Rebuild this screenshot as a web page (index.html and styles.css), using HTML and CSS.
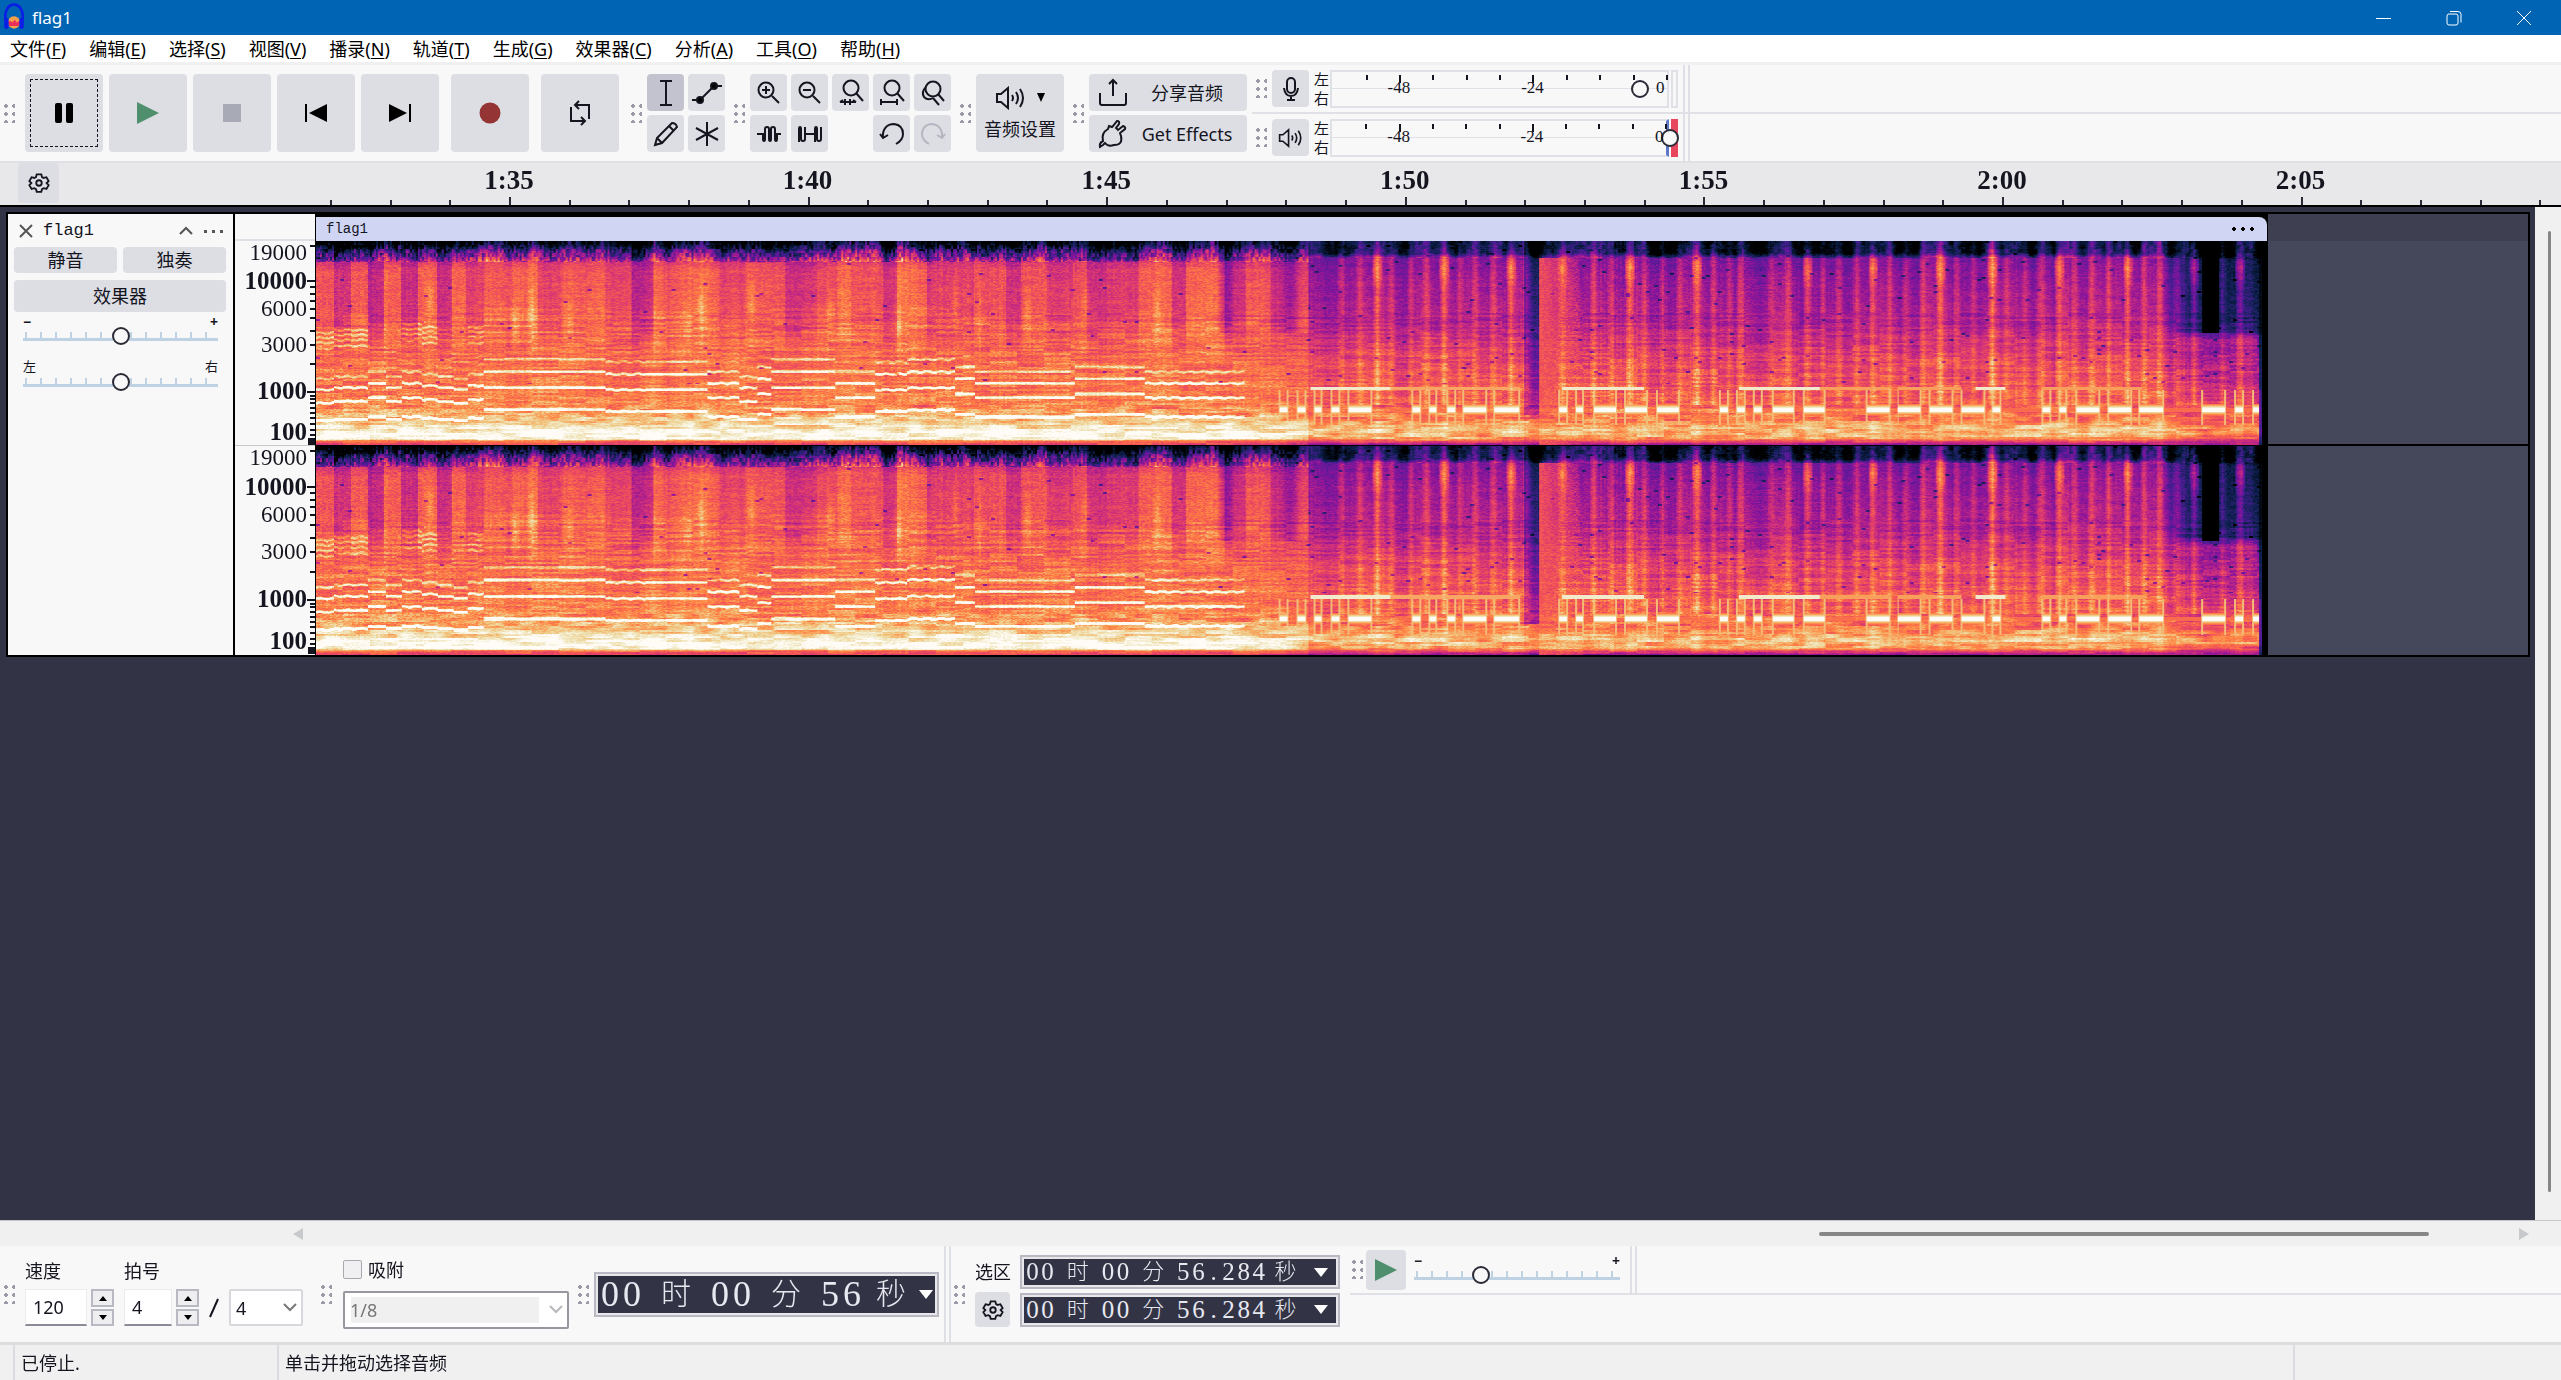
FILE: index.html
```html
<!DOCTYPE html>
<html lang="zh-CN">
<head>
<meta charset="utf-8">
<title>flag1</title>
<link rel="stylesheet" href="styles.css">
</head>
<body>
<svg class="defs" aria-hidden="true">
  <symbol id="gear" viewBox="0 0 24 24"><path d="M9.500 2.500h5l.8 3 1.800 1 3-.8 2.400 4.300-2.200 2.100 2.200 2.200-2.400 4.200-3-.8-1.800 1-.8 2.900h-5l-.8-2.900-1.800-1-3 .8L1.500 14.300l2.200-2.200L1.500 10l2.400-4.300 3 .8 1.800-1z"/><circle cx="12" cy="12" r="3"/></symbol>
  <symbol id="speaker" viewBox="0 0 32 24"><path d="M2 8h4l7-6v20l-7-6H2zM17 9q2 3 0 6M21 6q4 6 0 12M25 3q6 9 0 18"/></symbol>
</svg>

<header class="titlebar">
  <svg class="logo" viewBox="0 0 24 36"><path d="M3 22C0 10 6 3 12 3s12 7 9 19" fill="none" stroke="#0a1ee6" stroke-width="3"/><circle cx="12" cy="23" r="7" fill="#f5a04a"/><path d="M5 23l3-2 2 2 3-3 2 3 3-2 1 2-2 4H7z" fill="#e8305a"/><rect x="1" y="18" width="5" height="12" rx="2" fill="#0a1ee6"/><rect x="18" y="18" width="5" height="12" rx="2" fill="#0a1ee6"/></svg>
  <h1>flag1</h1>
  <div class="winbtns">
    <button aria-label="最小化"><svg width="16" height="16"><path d="M0 8.500h15"/></svg></button>
    <button aria-label="还原"><svg width="16" height="16"><rect x="1" y="4" width="11" height="11" rx="2"/><path d="M4 1.500h8q3 0 3 3v8"/></svg></button>
    <button aria-label="关闭"><svg width="16" height="16"><path d="M1 1l14 14M15 1L1 15"/></svg></button>
  </div>
</header>

<nav class="menubar">
  <a href="#">文件(<u>F</u>)</a><a href="#">编辑(<u>E</u>)</a><a href="#">选择(<u>S</u>)</a><a href="#">视图(<u>V</u>)</a><a href="#">播录(<u>N</u>)</a><a href="#">轨道(<u>T</u>)</a><a href="#">生成(<u>G</u>)</a><a href="#">效果器(<u>C</u>)</a><a href="#">分析(<u>A</u>)</a><a href="#">工具(<u>O</u>)</a><a href="#">帮助(<u>H</u>)</a>
</nav>

<section class="toolbar">
  <span class="grip"></span>
  <div class="transport">
    <button class="focused" aria-label="暂停"><svg width="20" height="20"><rect x="1" width="7" height="20" rx="2" fill="#000"/><rect x="12" width="7" height="20" rx="2" fill="#000"/></svg></button>
    <button aria-label="播放"><svg width="22" height="22"><path d="M0 0l22 11L0 22z" fill="#4f8f6d"/></svg></button>
    <button aria-label="停止"><svg width="18" height="18"><path d="M0 0h18v18H0z" fill="#a8abb5"/></svg></button>
    <button aria-label="跳到开头"><svg width="22" height="18"><path d="M22 0v18L4 9zM0 0h2v18H0z" fill="#000"/></svg></button>
    <button aria-label="跳到末尾"><svg width="22" height="18"><path d="M0 0v18l18-9zM20 0h2v18h-2z" fill="#000"/></svg></button>
    <button class="apart" aria-label="录制"><svg width="22" height="22"><circle cx="11" cy="11" r="10.500" fill="#943434"/></svg></button>
    <button class="apart" aria-label="循环"><svg class="line" width="24" height="26"><path d="M8 5h13v14M11 1L7 5l4 4M16 21H3V7M13 17l4 4-4 4"/></svg></button>
  </div>
  <span class="grip"></span>
  <div class="pad two">
    <button class="active" aria-label="选择工具"><svg class="line" width="26" height="26"><path d="M7 1h12M13 1v24M7 25h12"/></svg></button>
    <button aria-label="包络工具"><svg class="line" width="30" height="20"><path d="M0 17h8l14-14h8"/><circle cx="8" cy="17" r="3" fill="#000"/><circle cx="22" cy="3" r="3" fill="#000"/></svg></button>
    <button aria-label="绘制工具"><svg class="line" width="24" height="24"><path d="M1 23l2-7L18 1q4 0 5 4L8 21zM3 16l5 5M15 4l5 5"/></svg></button>
    <button aria-label="多功能工具"><svg class="line" width="24" height="24"><path d="M12 0v24M1 6l22 12M23 6L1 18"/></svg></button>
  </div>
  <span class="grip"></span>
  <div class="pad five">
    <button aria-label="放大"><svg class="line" width="22" height="22"><circle cx="8" cy="8" r="7.500"/><path d="M14 14l7 7M4 8h8M8 4v8"/></svg></button>
    <button aria-label="缩小"><svg class="line" width="22" height="22"><circle cx="8" cy="8" r="7.500"/><path d="M14 14l7 7M4 8h8"/></svg></button>
    <button aria-label="适应选区"><svg class="line" width="24" height="25"><circle cx="12" cy="8" r="7.500"/><path d="M17 13l7 8M1 22h16M6 19v6M11 19v6M1 22l3-2M17 22l-3-2"/></svg></button>
    <button aria-label="适应宽度"><svg class="line" width="24" height="25"><circle cx="12" cy="8" r="7.500"/><path d="M17 13l7 8M1 22h16M1 19v6M17 19v6"/></svg></button>
    <button aria-label="缩放切换"><svg class="line" width="24" height="24"><circle cx="12" cy="8" r="7.500"/><path d="M17 13l6 7M5 6q-5 5-2 10 4 4 9 1M12 17l6 7"/></svg></button>
    <button aria-label="修剪"><svg class="line" width="24" height="16"><path d="M0 8h6v5q0 2 1 2t1-2V3q0-2 2-2t2 2v10q0 2 1 2t1-2V3q0-2 2-2t2 2v10q0 2 1 2t1-2V8h4"/></svg></button>
    <button aria-label="静音选区"><svg class="line" width="24" height="16"><path d="M1 16V3q0-2 1-2t1 2v10q0 2 2 2t2-2V1M7 8h10M17 16V3q0-2 1-2t1 2v10q0 2 2 2t2-2V1"/></svg></button>
    <span></span>
    <button aria-label="撤销"><svg class="line" width="26" height="22"><path d="M4 15C3 6 8 1 15 1q9 1 9 10 0 6-7 10M1 11l3 4 5-3"/></svg></button>
    <button class="off" aria-label="重做" disabled><svg class="line" width="26" height="22"><path d="M22 15C23 6 18 1 11 1 2 2 2 11 2 11q0 6 7 10M25 11l-3 4-5-3"/></svg></button>
  </div>
  <span class="grip"></span>
  <button class="setup"><span><svg class="line" width="32" height="24"><use href="#speaker"/></svg><svg width="8" height="9"><path d="M0 0h8L4 9z"/></svg></span>音频设置</button>
  <span class="grip"></span>
  <div class="share">
    <button><svg class="line" width="28" height="28"><path d="M1 14v10q0 2 2 2h22q2 0 2-2V14M14 17V1M10 5l4-4 4 4"/></svg><span>分享音频</span></button>
    <button><svg class="line" width="28" height="28"><path d="M4 25l-3 2q-1-4 3-6-2-8 5-12l1-3 3 1 1-1 4-5q3 0 2 3l-3 4 2 2 5-4q3 1 2 3l-5 4 1 3q2 9-7 9-6 2-9-2z"/></svg><span>Get Effects</span></button>
  </div>
  <div class="meters">
    <div class="meter-row">
      <span class="grip"></span>
      <button aria-label="录音电平"><svg class="line" width="18" height="24"><rect x="5" y="1" width="8" height="15" rx="4"/><path d="M2 11q1 8 7 8t7-8M9 19v4M5 23h8"/></svg></button>
      <span class="lr"><i>左</i><i>右</i></span>
      <div class="meter"><input type="range" min="0" max="100" value="91" aria-label="录音音量"></div>
      <span class="clipbox"></span><span class="dock"></span>
    </div>
    <div class="meter-row">
      <span class="grip"></span>
      <button aria-label="播放电平"><svg class="line" width="26" height="22"><use href="#speaker"/></svg></button>
      <span class="lr"><i>左</i><i>右</i></span>
      <div class="meter hot"><input type="range" min="0" max="100" value="100" aria-label="播放音量"></div>
      <span class="clipbox hot"></span><span class="dock"></span>
    </div>
  </div>
</section>

<section class="timeline">
  <button aria-label="时间轴选项"><svg class="line" width="22" height="22"><use href="#gear"/></svg></button>
  <div class="ruler" id="ruler"></div>
</section>

<main class="work">
  <div class="tracks">
    <article class="track">
      <div class="panel">
        <div class="panel-head">
          <button aria-label="关闭轨道"><svg class="line" width="14" height="14"><path d="M1 1l12 12M13 1L1 13"/></svg></button>
          <h2>flag1</h2>
          <button aria-label="折叠"><svg class="line" width="14" height="8"><path d="M1 7l6-6 6 6"/></svg></button>
          <button aria-label="轨道菜单"><svg width="19" height="3"><path d="M0 0h3v3H0zM8 0h3v3H8zM16 0h3v3h-3z" fill="#555"/></svg></button>
        </div>
        <div class="pair"><button>静音</button><button>独奏</button></div>
        <button class="fx">效果器</button>
        <div class="slider"><div class="ends"><b>−</b><b>+</b></div><input type="range" value="50" aria-label="增益"></div>
        <div class="slider pan"><div class="ends"><span>左</span><span>右</span></div><input type="range" value="50" aria-label="声相"></div>
      </div>
      <div class="scale"><div class="scale-top"></div><div class="freq first"></div><div class="freq"></div></div>
      <div class="clip">
        <div class="clip-head"><span>flag1</span><svg width="22" height="6"><path d="M2 1l2 2-2 2-2-2zM11 1l2 2-2 2-2-2zM20 1l2 2-2 2-2-2z" stroke="#000"/></svg></div>
        <canvas class="spec first" width="1954" height="204"></canvas>
        <canvas class="spec" width="1954" height="209"></canvas>
      </div>
      <div class="rest"><div class="rest-head"></div><div class="lane first"></div><div class="lane"></div></div>
    </article>
  </div>
  <div class="vscroll"><i></i></div>
</main>

<div class="hscroll"><svg width="10" height="12"><path d="M10 0v12L0 6z"/></svg><i></i><svg width="10" height="12"><path d="M0 0v12l10-6z"/></svg></div>

<section class="toolbar bottom">
  <span class="grip"></span>
  <div class="tempo">
    <label class="field">速度<span class="spin"><input class="wide" value="120"><span><button aria-label="加快"><svg width="8" height="5"><path d="M0 5h8L4 0z"/></svg></button><button aria-label="减慢"><svg width="8" height="5"><path d="M0 0h8L4 5z"/></svg></button></span></span></label>
    <label class="field">拍号<span class="spin"><input value="4"><span><button aria-label="增加"><svg width="8" height="5"><path d="M0 5h8L4 0z"/></svg></button><button aria-label="减少"><svg width="8" height="5"><path d="M0 0h8L4 5z"/></svg></button></span></span></label>
    <svg class="line slash" width="10" height="20"><path d="M9 1L1 19"/></svg>
    <span class="combo"><select aria-label="拍号分母"><option>4</option></select><svg class="line" width="14" height="9"><path d="M1 1l6 6 6-6"/></svg></span>
  </div>
  <span class="grip snapgrip"></span>
  <div class="snap">
    <label><input type="checkbox">吸附</label>
    <span class="combo"><select disabled aria-label="吸附单位"><option>1/8</option></select><svg class="line" width="14" height="9"><path d="M1 1l6 6 6-6"/></svg></span>
  </div>
  <span class="grip"></span>
  <div class="time big" data-t="00|时|00|分|56|秒"></div>
  <span class="dock"></span>
  <span class="grip selgrip"></span>
  <div class="sel">
    <span>选区</span><div class="time" data-t="00|时|00|分|56.284|秒"></div>
    <button aria-label="选区选项"><svg class="line" width="22" height="22"><use href="#gear"/></svg></button><div class="time" data-t="00|时|00|分|56.284|秒"></div>
  </div>
  <div class="speed">
    <span class="grip"></span>
    <button aria-label="变速播放"><svg width="22" height="22"><path d="M0 0l22 11L0 22z" fill="#4f8f6d"/></svg></button>
    <div class="slider"><div class="ends"><b>−</b><b>+</b></div><input type="range" value="31" aria-label="播放速度"></div>
    <span class="dock"></span>
  </div>
</section>

<footer class="status"><span>已停止.</span><span>单击并拖动选择音频</span><span></span></footer>
<script src="app.js"></script>
</body>
</html>
```
FILE: styles.css
```css
* { box-sizing: border-box; }
body {
  margin: 0;
  height: 100vh;
  display: flex;
  flex-direction: column;
  background: #f8f8f8;
  color: #14151f;
  font: 18px/24px "Noto Sans", "Noto Sans CJK SC", sans-serif;
  overflow: hidden;
}
button, input, select { font: inherit; color: inherit; margin: 0; }
button {
  display: flex;
  align-items: center;
  justify-content: center;
  padding: 0;
  border: 0;
  border-radius: 4px;
  background: #dddee4;
}
svg { display: block; flex: none; overflow: visible; }
.defs { width: 0; height: 0; position: absolute; }
.line { fill: none; stroke: #14151f; stroke-width: 2; }

.titlebar { display: flex; align-items: center; height: 35px; flex: none; background: #0064b4; color: #fff; padding-left: 2px; }
.logo { width: 24px; height: 32px; }
.titlebar h1 { flex: 1; margin: 0 0 0 6px; font-size: 17px; font-weight: 400; }
.winbtns { display: flex; padding-right: 2px; }
.winbtns button { width: 70px; height: 35px; background: none; }
.winbtns svg { fill: none; stroke: #fff; stroke-width: 1; }

.menubar { display: flex; gap: 23px; height: 27px; flex: none; padding-left: 10px; background: #fff; line-height: 29px; }
.menubar a { color: #000; text-decoration: none; }
.menubar u { text-underline-offset: 2px; }

.toolbar { display: flex; align-items: center; flex: none; height: 101px; border-top: 3px solid #f0f0f0; border-bottom: 2px solid #dfe0e5; padding-left: 4px; }
.grip {
  flex: none;
  width: 11px;
  height: 19px;
  margin: 0 5px 0 9px;
  background: radial-gradient(circle at 2px 2px, #9a9ba6 2px, transparent 2px) 0 0 / 8px 8px;
}
.toolbar > .grip:first-child { margin: 0 10px 0 0; }
.transport { display: flex; gap: 6px; padding-right: 3px; }
.transport button { width: 78px; height: 78px; }
.transport .apart { margin-left: 6px; }
.transport .focused { position: relative; }
.focused::after { content: ""; position: absolute; inset: 5px; border: 1px dashed #14151f; }
.pad { display: grid; gap: 4px; grid-auto-rows: 37px; }
.two { grid-template-columns: repeat(2, 37px); }
.five { grid-template-columns: repeat(5, 37px); }
.pad .active { background: #c2c3ce; }
.off .line { stroke: #b4b6c0; }
.setup { flex-direction: column; gap: 7px; width: 88px; height: 78px; }
.setup span { display: flex; align-items: center; gap: 10px; }
.share { display: grid; gap: 4px; grid-template: 37px 37px / 158px; }
.share button { justify-content: flex-start; padding-left: 10px; }
.share span { flex: 1; text-align: center; }
.meters { flex: 1; align-self: stretch; display: flex; flex-direction: column; margin-left: 5px; }
.meter-row { flex: 1; display: flex; align-items: center; }
.meter-row:first-child { border-bottom: 2px solid #e0e1e6; }
.meter-row .grip { margin-left: 4px; }
.meter-row button { width: 37px; height: 37px; }
.lr { display: flex; flex-direction: column; justify-content: space-between; margin: 0 1px 0 5px; font-size: 15px; line-height: 19px; width: 15px; }
.lr i { font-style: normal; }
.meter { position: relative; width: 339px; height: 38px; border: 2px solid #e0e1e6; background: linear-gradient(#e0e1e6, #e0e1e6) 0 50% / 100% 1px no-repeat; font: 17px/16px "Liberation Serif", serif; }
.meter.hot { border-right: 3px solid #5f78c8; }
.meter .tick { position: absolute; top: 3px; width: 2px; height: 5px; background: #14151f; }
.meter .tick.major { height: 8px; }
.meter .num { position: absolute; top: 8px; transform: translateX(-50%); }
.meter input { position: absolute; left: 0; top: 7px; width: 347px; }
.clipbox { width: 7px; height: 38px; margin-left: 2px; border: 2px solid #e0e1e6; }
.clipbox.hot { border-color: #e8465f; background: #e8465f; }
.dock { align-self: stretch; width: 7px; margin-left: 5px; border: solid #dfe0e5; border-width: 0 2px; }

input[type=range] { appearance: none; display: block; height: 20px; background: none; }
input[type=range]::-webkit-slider-thumb { appearance: none; width: 18px; height: 18px; border: 2px solid #2a2b36; border-radius: 50%; background: #f8f8f8; }

.timeline { display: flex; height: 44px; flex: none; background: #e8e8ea; border-bottom: 2px solid #000; }
.timeline button { width: 41px; height: 40px; margin-left: 18px; }
.ruler { position: relative; flex: 1; overflow: hidden; font: bold 27px/30px "Liberation Serif", serif; }
.ruler i { position: absolute; bottom: 0; width: 2px; height: 5px; background: #2a2b36; }
.ruler i.major { height: 8px; }
.ruler span { position: absolute; top: 2px; transform: translateX(-50%); }

.work { flex: 1; display: flex; min-height: 0; background: #323446; }
.tracks { flex: 1; padding: 5px 5px 0 6px; }
.track { display: flex; border: 2px solid #000; }
.panel { width: 227px; border-right: 2px solid #000; background: #f8f8f8; padding: 5px 7px 4px 6px; }
.panel-head { display: flex; align-items: center; height: 24px; padding: 0 3px 0 5px; }
.panel-head button { background: none; margin-left: 11px; }
.panel-head button:first-child { margin-left: 0; }
.panel-head .line { stroke: #555; }
.panel-head h2 { flex: 1; margin: 0 0 0 10px; font: 17px/24px "Liberation Mono", monospace; }
.pair { display: grid; grid-template-columns: 1fr 1fr; gap: 6px; margin: 4px 0 7px; }
.pair button { height: 26px; }
.fx { width: 100%; height: 32px; }
.slider { padding: 4px 8px 0 9px; }
.ends { display: flex; justify-content: space-between; height: 11px; line-height: 11px; font-size: 14px; }
.slider input { width: 100%; height: 18px; background: linear-gradient(#bfd2e4, #bfd2e4) 0 11px / 100% 3px no-repeat, repeating-linear-gradient(90deg, #bfd2e4 0 2px, transparent 2px 15px) 2px 5px / 100% 6px no-repeat; }
.pan { padding-top: 14px; }
.pan .ends { height: 14px; line-height: 14px; font-size: 13px; }

.scale { width: 81px; border-right: 1px solid #000; background: #f8f8f8; color: #14151f; }
.scale-top { height: 27px; border-bottom: 2px solid #dfe0e5; }
.freq { position: relative; height: 209px; overflow: hidden; font: 23px/22px "Liberation Serif", serif; }
.freq.first { height: 205px; border-bottom: 1px solid #c8c9ce; }
.freq i { position: absolute; right: 0; width: 5px; height: 2px; background: #14151f; }
.freq i.major { width: 8px; }
.freq i.solid { height: 7px; width: 7px; }
.freq span { position: absolute; right: 8px; transform: translateY(-50%); }
.freq b { font-size: 25px; }
.clip { flex: 1954 1 0; min-width: 0; border-right: 1px solid #000; background: #000; }
.clip-head { display: flex; align-items: center; justify-content: space-between; height: 24px; margin-top: 3px; padding: 0 13px 0 10px; border-radius: 0 8px 0 0; background: #cfd5f2; font: 14px/24px "Liberation Mono", monospace; }
.spec { display: block; width: 100%; height: 209px; }
.spec.first { height: 204px; margin-bottom: 1px; }
.rest { flex: 260 1 0; background: #45475a; }
.rest-head { height: 27px; background: #3e3f50; }
.lane.first { height: 205px; border-bottom: 2px solid #000; }
.vscroll { width: 26px; background: #f0f0f0; padding: 24px 10px 28px 13px; display: flex; }
.vscroll i { flex: 1; border-radius: 2px; background: #868686; }

.hscroll { display: flex; align-items: center; flex: none; height: 26px; padding: 0 32px 0 293px; border-top: 1px solid #c8c8cc; background: #f0f0f0; }
.hscroll svg { fill: #c8c9cc; }
.hscroll i { width: 610px; height: 4px; margin: 0 90px 0 auto; border-radius: 2px; background: #868686; }

.bottom { height: 99px; border-top: 0; border-bottom: 3px solid #dddde0; }
.tempo { display: flex; align-items: flex-end; height: 66px; margin-bottom: 2px; }
.field { display: flex; flex-direction: column; justify-content: space-between; height: 66px; margin-right: 10px; line-height: 22px; }
.spin { display: flex; gap: 4px; }
.spin input { width: 48px; height: 37px; padding: 0 7px; border: 1px solid #ececec; border-bottom: 2px solid #8a8b96; background: #fff; }
.spin input.wide { width: 62px; }
.spin > span { display: grid; gap: 2px; grid-template-rows: 18px 17px; }
.spin button { width: 23px; border: 2px solid #b8b9c2; border-radius: 0; background: #eeeef0; }
.slash { margin: 0 10px 8px 0; }
.combo { position: relative; display: block; }
.combo select { appearance: none; display: block; width: 74px; height: 37px; padding: 0 5px; border: 2px solid #d8d8dc; border-radius: 2px; background: #fff; opacity: 1; }
.combo svg { position: absolute; right: 6px; top: 14px; stroke: #777; }
.snapgrip { margin: 0 11px 0 18px; }
.snap { display: flex; flex-direction: column; gap: 9px; margin-bottom: 2px; }
.snap label { display: flex; align-items: center; gap: 6px; height: 24px; }
.snap input { appearance: none; width: 19px; height: 19px; border: 1px solid #a8a8ae; border-radius: 2px; background: #f0f0f2; }
.snap select { width: 226px; height: 38px; border-color: #96979f; color: #777; background: linear-gradient(#f0f0f0, #f0f0f0) 6px 4px / 188px 26px no-repeat #fff; }
.snap .combo svg { stroke: #b8b8bc; }
.time { display: flex; align-items: center; width: 320px; height: 34px; border: 2px solid #b8b9c2; outline: 2px solid #e8e8ea; outline-offset: -4px; background: #323446; color: #e8e8f0; padding-left: 3px; font: 25px/30px "Liberation Serif", "Noto Sans CJK SC", serif; }
.time i { font-style: normal; width: 16px; text-align: center; }
.time em { font-style: normal; width: 48px; text-align: center; font-weight: 300; font-size: 22px; }
.time em:last-of-type { width: 41px; }
.time button { background: none; }
.time svg { fill: #fff; }
.time.big { width: 345px; height: 45px; padding-left: 3px; font-size: 36px; }
.big i { width: 22px; }
.big em { width: 66px; font-size: 30px; }
.big em:last-of-type { width: 56px; }
.selgrip { margin: 0 10px 0 3px; }
.sel { display: grid; grid-template-columns: 36px 320px; gap: 3px 9px; align-items: center; white-space: nowrap; margin-bottom: 6px; }
.sel button { width: 35px; height: 35px; }
.speed { flex: 1; align-self: flex-start; display: flex; align-items: center; height: 49px; margin-left: 10px; border-bottom: 2px solid #e0e1e6; }
.speed .grip { margin: 0 3px 0 2px; }
.speed button { width: 40px; height: 40px; }
.speed .slider { width: 220px; padding: 0 6px 0 8px; }
.speed .dock { margin-left: 4px; }

.status { display: flex; height: 35px; flex: none; background: #f0f0f0; padding-left: 13px; line-height: 36px; }
.status span { border-left: 2px solid #dcdce0; padding-left: 6px; width: 264px; }
.status span:nth-child(2) { flex: 1; }
.status span:last-child { width: 268px; }
```
FILE: app.js
```js
const add = (parent, tag, cls, text) => {
  const e = document.createElement(tag);
  if (cls) e.className = cls;
  if (text) e.textContent = text;
  parent.append(e);
  return e;
};

// Time ruler: one tick a second, a label every five seconds.
const ruler = document.getElementById('ruler');
const span = 2502, perSecond = 59.72;
for (let s = 92; s <= 129; s++) {
  const left = ((450 + (s - 95) * perSecond) / span * 100) + '%';
  add(ruler, 'i', s % 5 ? '' : 'major').style.left = left;
  if (s % 5 === 0) add(ruler, 'span', '', Math.floor(s / 60) + ':' + String(s % 60).padStart(2, '0')).style.left = left;
}

// Level meters, in dB.
document.querySelectorAll('.meter').forEach(m => {
  for (let i = 0; i < 10; i++) {
    const left = (10 + i * 9.97) + '%';
    const major = i === 1 || i === 5;
    add(m, 'i', 'tick' + (major ? ' major' : '')).style.left = left;
    if (major) add(m, 'span', 'num', i === 1 ? '-48' : '-24').style.left = left;
  }
  add(m, 'span', 'num', '0').style.left = '98%';
});

// Frequency scale of each channel.
const labels = [[19000, 12, 4], [10000, 40, 39], [6000, 68, 67], [3000, 104, 103], [1000, 150, 150], [100, 191, 197]];
document.querySelectorAll('.freq').forEach((f, n) => {
  const k = n ? 1.022 : 1;
  for (const [hz, y, t] of labels) {
    const bold = hz === 10000 || hz <= 1000;
    const s = add(f, bold ? 'b' : 'span');
    const inner = bold ? add(s, 'span', '', String(hz)) : s;
    if (!bold) s.textContent = hz;
    inner.style.top = y * k + 'px';
    add(f, 'i', hz === 100 ? 'solid' : bold ? 'major' : '').style.top = t * k + 'px';
  }
  for (const t of [45, 52, 59, 76, 89, 122, 154, 157, 161, 166, 171, 176, 182, 188, 193])
    add(f, 'i').style.top = t * k + 'px';
});

// Time fields: every digit has its own cell.
document.querySelectorAll('.time').forEach(t => {
  for (const part of t.dataset.t.split('|')) {
    if (/\d/.test(part)) for (const c of part) add(t, 'i', '', c);
    else add(t, 'em', '', part);
  }
  const b = add(t, 'button');
  b.setAttribute('aria-label', '格式');
  b.innerHTML = '<svg width="14" height="9"><path d="M0 0h14L7 9z"/></svg>';
});

// Spectrogram.
const stops = [[0, 0, 0, 0], [.16, 14, 34, 82], [.3, 76, 28, 150], [.42, 140, 20, 155], [.55, 205, 45, 125], [.66, 242, 82, 88], [.76, 255, 132, 66], [.86, 240, 200, 130], [.93, 240, 232, 195], [1, 255, 252, 248]];
const palette = [];
for (let i = 0; i < 256; i++) {
  const v = i / 255;
  let j = 1;
  while (j < stops.length - 1 && stops[j][0] < v) j++;
  const a = stops[j - 1], b = stops[j], q = (v - a[0]) / (b[0] - a[0]);
  palette.push([1, 2, 3].map(c => a[c] + (b[c] - a[c]) * q));
}
const hash = (x, y) => {
  let h = Math.imul(x | 0, 374761393) + Math.imul(y | 0, 668265263);
  h = Math.imul(h ^ (h >>> 13), 1274126177);
  return ((h ^ (h >>> 16)) >>> 0) / 4294967296;
};
const smooth = (x, seed) => {
  const i = Math.floor(x), q = x - i, s = q * q * (3 - 2 * q);
  return hash(i, seed) * (1 - s) + hash(i + 1, seed) * s;
};
const lerp = (pts, t) => {
  for (let i = 1; i < pts.length; i++) if (t <= pts[i][0]) {
    const [a, av] = pts[i - 1], [b, bv] = pts[i];
    return av + (bv - av) * (t - a) / (b - a);
  }
  return pts[pts.length - 1][1];
};
const mel = f => Math.log(1 + f / 700) / Math.log(32.5);
const loud = [[0, .02], [.025, .16], [.05, .34], [.08, .46], [.1, .6], [.14, .66], [.4, .685], [.6, .71], [.75, .74], [.82, .78], [.88, .87], [.92, .95], [.935, 1], [.968, 1], [.978, .72], [1, .6]];
const soft = [[0, .06], [.06, .12], [.08, .36], [.2, .42], [.4, .47], [.55, .58], [.7, .64], [.8, .67], [.87, .74], [.92, .85], [.965, .8], [1, .4]];
const tail = [[0, 0], [.07, 0], [.09, .12], [.43, .17], [.48, .44], [.7, .52], [.8, .6], [.87, .68], [.94, .78], [1, .42]];
const A = p => 884 + p / 2.24, B = p => 1584 + p / 2.369;
const dashes = [[180, 198], [220, 238], [258, 275], [297, 315], [335, 387], [478, 496], [516, 533], [556, 574], [593, 645], [663, 717], [808, 826], [845, 862], [886, 935], [956, 1005], [1027, 1076], [1168, 1186], [1207, 1224], [1244, 1262], [1286, 1334], [1356, 1404], [1497, 1548]].map(d => d.map(A))
  .concat([[0, 53], [75, 129], [150, 204], [223, 243], [342, 361], [382, 400], [422, 477], [498, 552], [573, 628], [722, 776], [799, 819], [841, 858]].map(d => d.map(B)));
const upper = [[250, 430, 1], [815, 998, 1], [1210, 1392, 1], [430, 720, .35], [1392, 1548, .3]].map(d => [A(d[0]), A(d[1]), d[2]]).concat([[B(183), B(255), 1], [B(0), B(150), .3], [B(340), B(580), .3]]);
const hits = [[320, 1], [360, 1], [400, 2], [432, 1], [475, 1], [510, 1.400], [550, 2], [585, 1], [620, 1], [660, 1], [700, 2], [735, 1], [815, 2], [885, 1], [925, 1], [967, 2], [1000, 1], [1040, 1], [1078, 1.400], [1117, 2], [1155, 1], [1190, 1], [1215, 1.400], [1285, 1], [1322, 1], [1365, 2], [1400, 1], [1435, 1], [1475, 1], [1512, 2], [1550, 1]].map(h => [A(h[0]), h[1]])
  .concat([[18, 1], [60, 1], [100, 2], [140, 1], [180, 1], [225, 2], [258, 1], [302, 1], [340, 1], [382, 2], [420, 1], [460, 1], [500, 1.400], [545, 2], [583, 1], [622, 1], [662, 1], [703, 2], [770, 1.400], [812, 2]].map(h => [B(h[0]), h[1]]));
// Blocks of the first part: end of block, level of the treble.
const blocks = [[18, 0], [35, -.12], [52, .02], [68, -.2], [85, .02], [102, -.16], [121, .03], [136, -.14], [150, .05], [168, -.08], [197, 0], [222, .04], [246, -.08], [272, 0], [290, .02], [316, -.04], [338, -.18], [352, .02], [372, -.02], [404, .02], [430, -.06], [470, .01]];
for (let x = 470, i = 0; x < 1000; i++) { x += 12 + hash(i, 61) * 22; blocks.push([x, hash(i, 62) * .18 - .13]); }
// Bright treble spots: x, depth, strength.
const flares = [[114, .3, .1], [199, .4, .12], [216, .35, .13], [253, .4, .1], [371, .4, .08], [386, .33, .13], [436, .32, .12], [515, .35, .12], [582, .4, .1], [640, .3, .1], [664, .4, .08], [712, .35, .12], [770, .3, .1], [842, .35, .1]];
// Sung notes of the first part: start, end, pitch, vibrato.
const notes = [[0, 18, 370, 1], [18, 52, 392, 1], [52, 70, 440, 0], [70, 86, 392, 0], [86, 106, 440, 1], [106, 122, 415, 1], [122, 138, 392, 0], [138, 152, 370, 0], [152, 168, 415, 1], [168, 290, 587, 0], [290, 330, 554, 1], [330, 392, 554, 0], [392, 424, 440, 1], [424, 442, 392, 1], [442, 456, 494, 1], [456, 520, 587, 0], [520, 560, 440, 0], [560, 592, 554, 1], [592, 640, 587, 1], [640, 660, 494, 0], [660, 760, 440, 0], [760, 830, 494, 0], [830, 930, 440, 1]];

const draw = cv => {
  const g = cv.getContext('2d'), w = cv.width, h = cv.height, img = g.createImageData(w, h);
  for (let x = 0; x < w; x++) {
    const xb = x >> 1;
    const mix = x < 900 ? 0 : x < 994 ? (x - 900) / 260 : 1;
    const ending = x > 1848 ? Math.min(1, (x - 1848) / 30) : 0;
    const colFast = hash(xb, 3) - .5, colSlow = smooth(x / 13, 5) - .5, colWide = smooth(x / 34, 8) - .5;
    const block = (blocks.find(b => x < b[0]) || [0, 0])[1];
    let hit = 0;
    for (const [hx, a] of hits) {
      const d = x - hx;
      if (Math.abs(d) < 4) hit = Math.max(hit, (.04 + a * .05) * (1 - Math.abs(d) / 6));
      else if (d > 0 && d < 14) hit = Math.max(hit, a * .03 * (1 - d / 14));
    }
    const bigHit = hits.find(e => e[1] === 2 && Math.abs(x - e[0]) < 5);
    const gap = x > 1209 && x < 1225 ? 1 : 0, burst = x >= 1225 && x < 1266 ? 1 - (x - 1225) / 50 : 0;
    const on = dashes.some(d => x >= d[0] && x <= d[1]);
    const edge = dashes.some(d => Math.abs(x - d[0]) < 1 || Math.abs(x - d[1]) < 1);
    const up = upper.find(d => x >= d[0] && x <= d[1]);
    const note = notes.find(n => x >= n[0] && x < n[1]);
    for (let y = 0; y < h; y++) {
      const t = y / h;
      let s = lerp(soft, t);
      if (ending) s = s * (1 - ending) + lerp(tail, t) * ending;
      const l = lerp(loud, t);
      let v = l * (1 - mix) + s * mix;
      const high = t < .8 ? 1 : .3;
      if (mix < 1) {
        v += (colFast * .03 + colSlow * .05 + colWide * .03) * high;
        if (t < .8) v += block * (t < .08 ? .9 : t < .4 ? .8 : Math.max(0, .8 - (t - .4) * 4));
        if (t < .1) v += (hash(xb, y >> 2) - .5) * .3 + colSlow * .3;
        if (mix > 0 && t < .45) v += colSlow * .3 - .05;
        for (const [fx, ft, fa] of flares) {
          const d = Math.abs(x - fx);
          if (d < 6 && t < .55) v += fa * (1 - d / 6) * Math.max(.25, 1 - Math.abs(t - ft) * 5);
        }
      } else {
        v += (colFast * .04 + colSlow * .09) * high + hit * (t < .8 ? 1.3 : .3);
        if (t < .08) v += colSlow * .3 + (hash(xb >> 1, y >> 2) - .5) * .12;
        if (t < .35) v += hit * .5;
        if (bigHit) v += .16 * Math.max(0, 1 - Math.abs(t - .13) * 9);
      }
      v += (hash(xb, y) - .5) * (t > .86 ? .07 : .1);
      const seg = Math.floor(x / 27);
      v += (hash(seg, (y >> 1) + 900) - .5) * (t > .35 ? .11 : .04);
      if (t > .8 && t < .97) v += (smooth(x / 15, 40 + (y >> 2)) - .5) * .14;
      if (hash(xb >> 1, (y >> 1) + 77) < (mix === 1 ? .012 : .004) && t < .7) v -= .22;
      if (note && mix < 1) {
        const vib = note[3] ? 1 + .014 * Math.sin(x / 2.2) : 1;
        for (let k = 1; k <= 11; k++) {
          const d = Math.abs(y - h * (1 - mel(note[2] * k * vib)));
          if (d < 1.6) {
            const amp = k < 4 ? .32 : k === 4 ? .2 : k > 7 && note[3] && x < 170 ? .17 : .05;
            v += amp * (1 - d / 2.6) * (1 - mix * 2);
          }
        }
      }
      if (gap) v -= t < .85 ? .2 : .05;
      if (burst && t > .08) v = Math.max(v, v + burst * (.68 - v) * .9 + (hash(xb, y) - .5) * .06);
      if (x > 884) {
        const d = Math.abs(y - h * .824);
        if (on && d < 6) v = Math.max(v, d < 2 ? 1 : .94 - (d - 2) * .06);
        if (edge && t > .73 && t < .9) v = Math.max(v, .84);
        if (!on && mix === 1 && !gap && d < 2) v = Math.max(v, .71);
        if (up && Math.abs(y - h * .72) < 1.6) v = Math.max(v, .74 + up[2] * .2);
      }
      if (x > 1888 && x < 1906 && t < .45) v = 0;
      if (x > 1948) v = 0;
      else if (x > 1945) v *= .4;
      const c = palette[Math.max(0, Math.min(255, Math.round(v * 255)))], o = (y * w + x) * 4;
      img.data[o] = c[0]; img.data[o + 1] = c[1]; img.data[o + 2] = c[2]; img.data[o + 3] = 255;
    }
  }
  g.putImageData(img, 0, 0);
};
document.querySelectorAll('.spec').forEach(draw);
```
